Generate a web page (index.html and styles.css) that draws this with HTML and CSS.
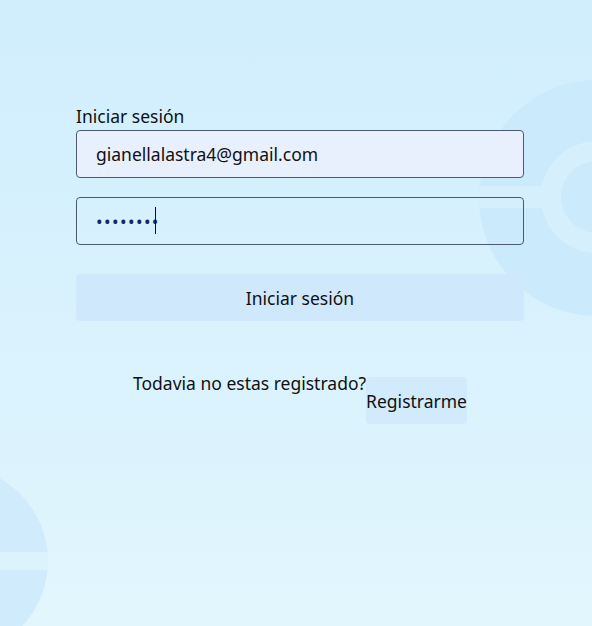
FILE: index.html
```html
<!DOCTYPE html>
<html lang="es">
<head>
<meta charset="utf-8">
<title>Iniciar sesión</title>
<link rel="stylesheet" href="styles.css">
</head>
<body>
<div class="bg">
  <svg class="ball ball-right" width="240" height="240" viewBox="0 0 240 240">
    <defs><clipPath id="cr"><circle cx="120" cy="120" r="118"/></clipPath></defs>
    <circle cx="120" cy="120" r="118" fill="#cbeafc"/>
    <rect x="0" y="108" width="240" height="22" fill="#d5effd" clip-path="url(#cr)"/>
    <circle cx="120" cy="119" r="56" fill="#d5effd"/>
    <circle cx="120" cy="119" r="36" fill="#cbeafc"/>
  </svg>
  <svg class="ball ball-left" width="200" height="200" viewBox="0 0 200 200">
    <defs><clipPath id="cl"><circle cx="100" cy="100" r="95"/></clipPath></defs>
    <circle cx="100" cy="100" r="95" fill="#d0ecfc"/>
    <rect x="0" y="91" width="200" height="18" fill="#dcf3fd" clip-path="url(#cl)"/>
  </svg>
  <main class="form">
    <label class="title" for="email">Iniciar sesión</label>
    <input id="email" class="field filled" type="email" value="gianellalastra4@gmail.com">
    <div class="pw-wrap">
      <input class="field pw" type="password" value="12345678">
      <span class="caret"></span>
    </div>
    <button class="submit" type="button">Iniciar sesión</button>
    <div class="register">
      <p class="question">Todavia no estas registrado?</p>
      <button class="reg-btn" type="button">Registrarme</button>
    </div>
  </main>
</div>
</body>
</html>
```

FILE: styles.css
```css
html, body {
  margin: 0;
  padding: 0;
}
body {
  font-family: "Noto Sans", "Open Sans", sans-serif;
  color: #111;
}
.bg {
  position: relative;
  width: 592px;
  height: 626px;
  overflow: hidden;
  background: linear-gradient(180deg, #d1eefd 0%, #d9f2fd 55%, #e2f6fd 100%);
}
.ball {
  position: absolute;
}
.ball-right {
  left: 477px;
  top: 78px;
}
.ball-left {
  left: -147px;
  top: 461px;
}
.form {
  position: relative;
  width: 448px;
  margin-left: 76px;
  padding-top: 103px;
  display: flex;
  flex-direction: column;
}
.title {
  font-size: 17.5px;
  line-height: 27px;
}
.field {
  box-sizing: border-box;
  width: 448px;
  height: 48px;
  border: 1px solid #4b5a6d;
  border-radius: 4px;
  padding: 0 19px;
  font-family: inherit;
  font-size: 17.5px;
  color: #111;
  background: transparent;
  outline: none;
}
.filled {
  background: #e8effd;
}
.pw-wrap {
  position: relative;
  margin-top: 19px;
}
.pw {
  display: block;
  color: #14285a;
  letter-spacing: 1.4px;
}
.caret {
  position: absolute;
  left: 79px;
  top: 10px;
  width: 1px;
  height: 27px;
  background: #111;
}
.submit {
  margin-top: 29px;
  height: 47px;
  border: none;
  border-radius: 4px;
  background: #cfe8fc;
  font-family: inherit;
  font-size: 17.5px;
  color: #111;
}
.register {
  display: flex;
  justify-content: center;
  align-items: flex-start;
  margin-top: 50px;
}
.question {
  margin: 0;
  font-size: 17.5px;
  line-height: 24px;
}
.reg-btn {
  margin-top: 6px;
  height: 47px;
  padding: 0;
  border: none;
  border-radius: 4px;
  background: #d1eafc;
  font-family: inherit;
  font-size: 17.5px;
  color: #111;
}
```
